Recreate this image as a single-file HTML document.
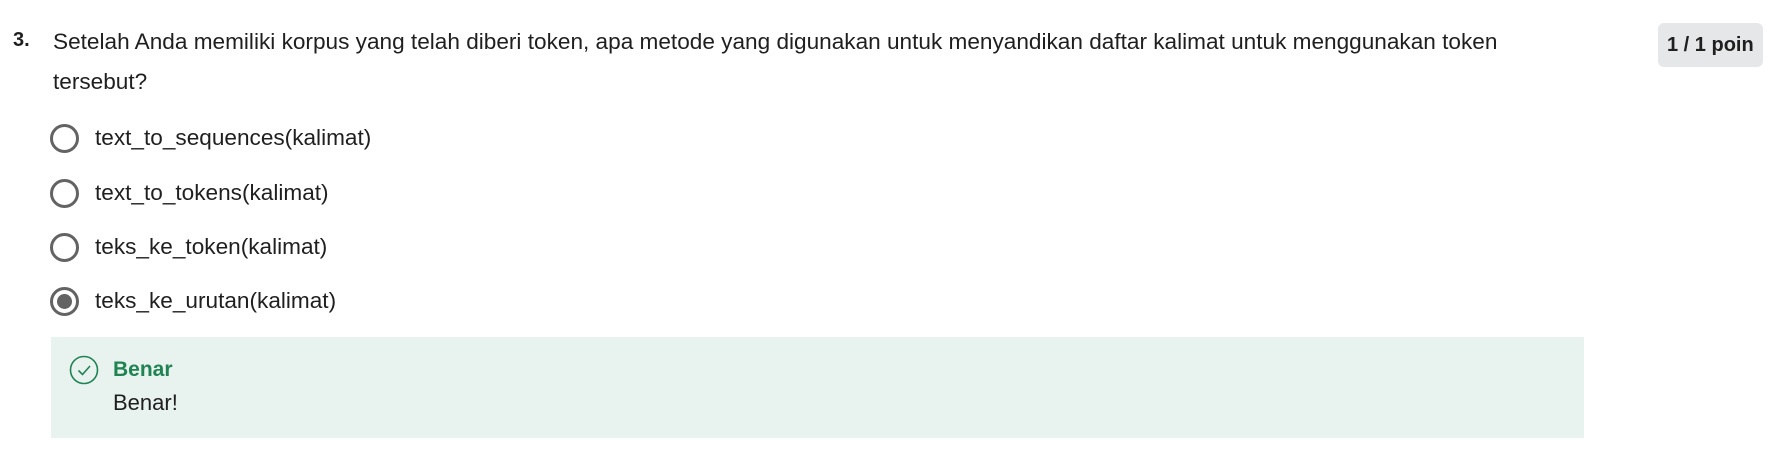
<!DOCTYPE html>
<html><head><meta charset="utf-8"><style>
*{margin:0;padding:0;box-sizing:border-box}
body{width:1768px;height:451px;background:#fff;font-family:"Liberation Sans",sans-serif;color:#1f1f1f;position:relative;overflow:hidden}
.a{position:absolute;white-space:nowrap;line-height:1}
.q{font-size:22.6px}
.r{position:absolute;width:29px;height:29px;border:3px solid #636363;border-radius:50%}
.r.s::after{content:"";position:absolute;left:4px;top:4px;width:15px;height:15px;border-radius:50%;background:#636363}
.o{font-size:22.6px}
</style></head><body>
<div class="a" style="left:13px;top:30px;font-size:20px;font-weight:bold">3.</div>
<div class="a q" style="left:53px;top:31px">Setelah Anda memiliki korpus yang telah diberi token, apa metode yang digunakan untuk menyandikan daftar kalimat untuk menggunakan token</div>
<div class="a q" style="left:53px;top:71px">tersebut?</div>
<div style="position:absolute;left:1658px;top:23px;width:105px;height:44px;background:#e5e7e9;border-radius:6px"></div>
<div class="a" style="left:1667px;top:35px;font-size:20px;font-weight:bold">1 / 1 poin</div>

<div class="r" style="left:50px;top:124px"></div>
<div class="a o" style="left:95px;top:127px">text_to_sequences(kalimat)</div>
<div class="r" style="left:50px;top:179px"></div>
<div class="a o" style="left:95px;top:182px">text_to_tokens(kalimat)</div>
<div class="r" style="left:50px;top:233px"></div>
<div class="a o" style="left:95px;top:236px">teks_ke_token(kalimat)</div>
<div class="r s" style="left:50px;top:287px"></div>
<div class="a o" style="left:95px;top:290px">teks_ke_urutan(kalimat)</div>

<div style="position:absolute;left:51px;top:337px;width:1533px;height:101px;background:#e8f2ee"></div>
<svg style="position:absolute;left:69px;top:355px" width="30" height="30" viewBox="0 0 30 30"><circle cx="15" cy="15" r="13.5" fill="none" stroke="#1f8354" stroke-width="1.6"/><path d="M9.5 15.5 L13.5 19.5 L21 11" fill="none" stroke="#1f8354" stroke-width="1.6"/></svg>
<div class="a" style="left:113px;top:359px;font-size:21px;font-weight:bold;color:#1f8354">Benar</div>
<div class="a" style="left:113px;top:392px;font-size:22px">Benar!</div>
</body></html>
